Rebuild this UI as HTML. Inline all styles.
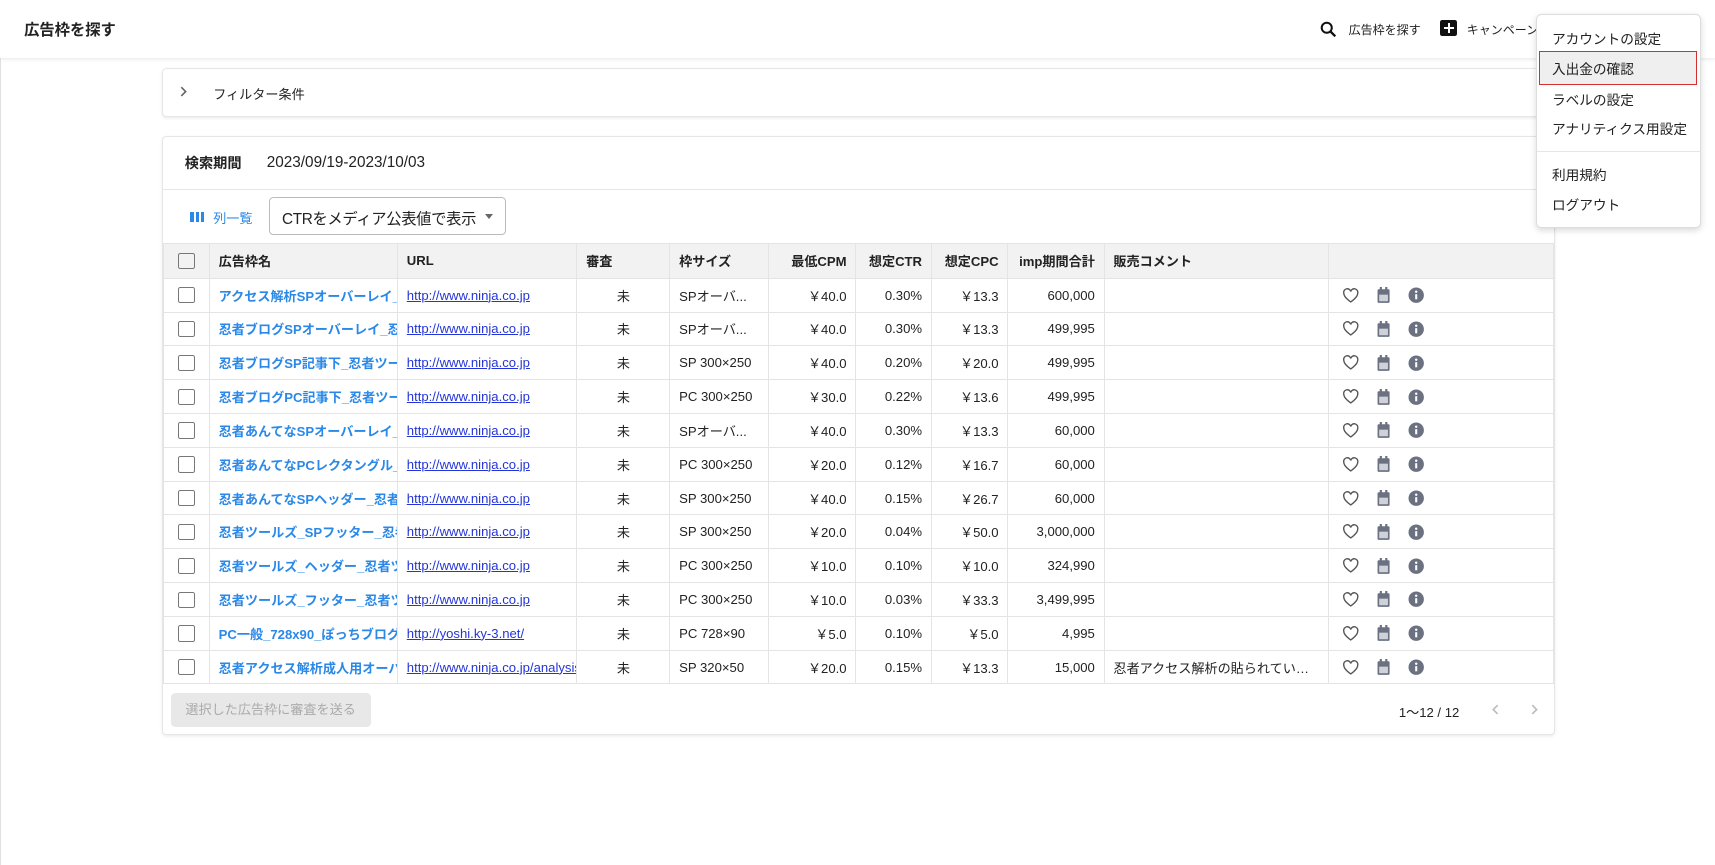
<!DOCTYPE html>
<html><head><meta charset="utf-8">
<style>
html{zoom:1.09375}
body{margin:0;width:1568px;height:791px;background:#fff;font-family:"Liberation Sans","Noto Sans CJK JP",sans-serif;color:#222;position:relative;overflow:hidden;font-size:12px}
.abs{position:absolute}
.hdr{left:0;top:0;width:1568px;height:53px;background:#fff;box-shadow:0 1px 4px rgba(0,0,0,.12);z-index:2}
.card{background:#fff;border:1px solid #e6e6e6;border-radius:4px;box-shadow:0 1px 3px rgba(0,0,0,.08)}
table{border-collapse:collapse;position:absolute;left:149px;top:222px;width:1271px;table-layout:fixed}
td,th{height:30px;border:1px solid #e4e4e4;padding:0 8px;font-size:12px;white-space:nowrap;overflow:hidden}
th{background:#f2f2f2;font-weight:bold;text-align:left;height:31px;color:#222}
td.r,th.r{text-align:right}
td.c{text-align:center}
.cb{display:inline-block;width:13px;height:13px;border:1.5px solid #777;border-radius:2px;vertical-align:middle}
a.n{color:#2a88e8;font-weight:bold;text-decoration:none}
a.u{color:#2435d8;text-decoration:underline}
.menu{left:1404px;top:13px;width:149px;height:194px;z-index:5;background:#fff;border:1px solid #ddd;border-radius:5px;box-shadow:0 2px 6px rgba(0,0,0,.15)}
.mi{position:absolute;left:14px;font-size:12.5px;color:#222}
</style></head><body>
<div class="abs" style="left:0;top:53px;width:1px;height:738px;background:#e0e0e0"></div>
<div class="abs hdr">
 <div class="abs" style="left:22px;top:16px;font-size:14px;font-weight:bold">広告枠を探す</div>
 <svg class="abs" style="left:1206px;top:18px" width="17" height="17" viewBox="0 0 24 24"><circle cx="10" cy="10" r="6.5" fill="none" stroke="#111" stroke-width="2.6"/><path d="M15 15l6 6" stroke="#111" stroke-width="3"/></svg>
 <div class="abs" style="left:1233px;top:19px;font-size:11px">広告枠を探す</div>
 <div class="abs" style="left:1317px;top:18px;width:15px;height:15px;background:#111;border-radius:2px"></div>
 <div class="abs" style="left:1320px;top:24.5px;width:9px;height:2px;background:#fff"></div>
 <div class="abs" style="left:1323.5px;top:21px;width:2px;height:9px;background:#fff"></div>
 <div class="abs" style="left:1341px;top:19px;font-size:11px">キャンペーン</div>
</div>
<div class="abs menu">
 <div class="mi" style="top:12px">アカウントの設定</div>
 <div class="abs" style="left:2px;top:33px;width:143px;height:29px;background:#efefef;border:1px solid #d32f2f"></div>
 <div class="mi" style="top:39px">入出金の確認</div>
 <div class="mi" style="top:67px">ラベルの設定</div>
 <div class="mi" style="top:94px">アナリティクス用設定</div>
 <div class="abs" style="left:0;top:124px;width:149px;height:1px;background:#e6e6e6"></div>
 <div class="mi" style="top:136px">利用規約</div>
 <div class="mi" style="top:163px">ログアウト</div>
</div>
<div class="abs card" style="left:148px;top:62px;width:1272px;height:43px">
 <svg class="abs" style="left:14px;top:15px" width="10" height="12" viewBox="0 0 10 12"><path d="M3 2l4 4-4 4" fill="none" stroke="#666" stroke-width="1.5"/></svg>
 <div class="abs" style="left:46px;top:14px;font-size:12px">フィルター条件</div>
</div>
<div class="abs card" style="left:148px;top:124px;width:1272px;height:546px">
 <div class="abs" style="left:20px;top:15px;font-size:13px;font-weight:bold">検索期間</div>
 <div class="abs" style="left:95px;top:16px;font-size:14px">2023/09/19-2023/10/03</div>
 <div class="abs" style="left:0;top:48px;width:1272px;height:1px;background:#e6e6e6"></div>
 <div class="abs" style="left:25px;top:69px;width:3px;height:9px;background:#2a88e8"></div>
 <div class="abs" style="left:30px;top:69px;width:3px;height:9px;background:#2a88e8"></div>
 <div class="abs" style="left:35px;top:69px;width:3px;height:9px;background:#2a88e8"></div>
 <div class="abs" style="left:46px;top:65px;font-size:12px;color:#2a88e8">列一覧</div>
 <div class="abs" style="left:97px;top:55px;width:215px;height:33px;border:1px solid #bbb;border-radius:4px">
  <div class="abs" style="left:11px;top:8px;font-size:14px;letter-spacing:-0.3px">CTRをメディア公表値で表示</div>
  <div class="abs" style="left:197px;top:15px;width:0;height:0;border-left:4px solid transparent;border-right:4px solid transparent;border-top:5px solid #666"></div>
 </div>
 <div class="abs" style="left:7px;top:509px;width:183px;height:31px;background:#e8e8e8;border-radius:4px;color:#aaa;font-size:12px;text-align:center;line-height:31px">選択した広告枠に審査を送る</div>
 <div class="abs" style="left:1130px;top:517px;font-size:12px">1〜12 / 12</div>
 <svg class="abs" style="left:1213px;top:518px" width="10" height="12" viewBox="0 0 10 12"><path d="M7 2L3 6l4 4" fill="none" stroke="#bbb" stroke-width="1.5"/></svg>
 <svg class="abs" style="left:1249px;top:518px" width="10" height="12" viewBox="0 0 10 12"><path d="M3 2l4 4-4 4" fill="none" stroke="#bbb" stroke-width="1.5"/></svg>
</div>
<table>
<colgroup><col style="width:42px"><col style="width:172px"><col style="width:164px"><col style="width:85px"><col style="width:90px"><col style="width:80px"><col style="width:69px"><col style="width:70px"><col style="width:88px"><col style="width:205px"><col style="width:206px"></colgroup>
<tr><th style="text-align:center"><span class="cb"></span></th><th>広告枠名</th><th>URL</th><th>審査</th><th>枠サイズ</th><th class="r">最低CPM</th><th class="r">想定CTR</th><th class="r">想定CPC</th><th class="r">imp期間合計</th><th>販売コメント</th><th></th></tr>
<tbody id="tb"></tbody>
</table>
<script>
var rows=[
["アクセス解析SPオーバーレイ_","http://www.ninja.co.jp","SPオーバ...","￥40.0","0.30%","￥13.3","600,000",""],
["忍者ブログSPオーバーレイ_忍","http://www.ninja.co.jp","SPオーバ...","￥40.0","0.30%","￥13.3","499,995",""],
["忍者ブログSP記事下_忍者ツー","http://www.ninja.co.jp","SP 300×250","￥40.0","0.20%","￥20.0","499,995",""],
["忍者ブログPC記事下_忍者ツー","http://www.ninja.co.jp","PC 300×250","￥30.0","0.22%","￥13.6","499,995",""],
["忍者あんてなSPオーバーレイ_","http://www.ninja.co.jp","SPオーバ...","￥40.0","0.30%","￥13.3","60,000",""],
["忍者あんてなPCレクタングル_","http://www.ninja.co.jp","PC 300×250","￥20.0","0.12%","￥16.7","60,000",""],
["忍者あんてなSPヘッダー_忍者","http://www.ninja.co.jp","SP 300×250","￥40.0","0.15%","￥26.7","60,000",""],
["忍者ツールズ_SPフッター_忍者","http://www.ninja.co.jp","SP 300×250","￥20.0","0.04%","￥50.0","3,000,000",""],
["忍者ツールズ_ヘッダー_忍者ツ","http://www.ninja.co.jp","PC 300×250","￥10.0","0.10%","￥10.0","324,990",""],
["忍者ツールズ_フッター_忍者ツ","http://www.ninja.co.jp","PC 300×250","￥10.0","0.03%","￥33.3","3,499,995",""],
["PC一般_728x90_ぽっちブログ","http://yoshi.ky-3.net/","PC 728×90","￥5.0","0.10%","￥5.0","4,995",""],
["忍者アクセス解析成人用オーバ","http://www.ninja.co.jp/analysis","SP 320×50","￥20.0","0.15%","￥13.3","15,000","忍者アクセス解析の貼られてい…"]];
var icons='<svg width="16" height="14" viewBox="0 0 24 22" style="vertical-align:middle;margin-left:4px"><path d="M12 20S2 13.5 2 7.5A5 5 0 0 1 12 5a5 5 0 0 1 10 2.5C22 13.5 12 20 12 20z" fill="none" stroke="#555" stroke-width="2"/></svg>'+
'<svg width="12" height="15" viewBox="0 0 12 15" style="vertical-align:middle;margin-left:16px"><rect x="0.5" y="2" width="11" height="12.5" rx="1" fill="#6b7180"/><rect x="2.5" y="0" width="2" height="3" fill="#6b7180"/><rect x="7.5" y="0" width="2" height="3" fill="#6b7180"/><rect x="2" y="7" width="8" height="6" fill="#cfd2d8"/></svg>'+
'<svg width="15" height="15" viewBox="0 0 16 16" style="vertical-align:middle;margin-left:16px"><circle cx="8" cy="8" r="7.5" fill="#6b7180"/><rect x="7" y="7" width="2" height="5" fill="#fff"/><circle cx="8" cy="4.6" r="1.2" fill="#fff"/></svg>';
var h='';rows.forEach(function(r){h+='<tr><td class="c"><span class="cb"></span></td><td><a class="n">'+r[0]+'</a></td><td><a class="u">'+r[1]+'</a></td><td class="c">未</td><td>'+r[2]+'</td><td class="r">'+r[3]+'</td><td class="r">'+r[4]+'</td><td class="r">'+r[5]+'</td><td class="r">'+r[6]+'</td><td>'+r[7]+'</td><td>'+icons+'</td></tr>'});
document.getElementById('tb').innerHTML=h;
</script>
</body></html>
